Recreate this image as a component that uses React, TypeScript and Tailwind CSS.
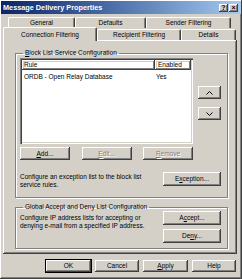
import React from "react";

const raised =
  "shadow-[inset_-1px_-1px_#404040,inset_1px_1px_#ffffff,inset_-2px_-2px_#808080,inset_2px_2px_#d4d0c8]";
const sunken =
  "shadow-[inset_1px_1px_#808080,inset_2px_2px_#404040,inset_-1px_-1px_#ffffff,inset_-2px_-2px_#d4d0c8]";
const disabled = "text-[#808080] [text-shadow:1px_1px_#ffffff]";

function Btn({
  children,
  className = "",
  off = false,
  def = false,
}: {
  children: React.ReactNode;
  className?: string;
  off?: boolean;
  def?: boolean;
}) {
  return (
    <div
      className={`flex items-center justify-center bg-[#d4d0c8] ${raised} ${
        def ? "outline outline-1 outline-black" : ""
      } ${off ? disabled : "text-black"} ${className}`}
    >
      {children}
    </div>
  );
}

function Tab({ label, className = "", active = false }: { label: string; className?: string; active?: boolean }) {
  return (
    <div
      className={`flex items-center justify-center rounded-t-[2px] border-l border-t border-r border-l-white border-t-white border-r-[#404040] bg-[#d4d0c8] shadow-[inset_-1px_0_#808080] ${
        active ? "relative z-10 mb-[-1px] h-[14px]" : "h-[11px]"
      } ${className}`}
    >
      {label}
    </div>
  );
}

function Chevron({ up }: { up?: boolean }) {
  return (
    <svg width="7" height="4" viewBox="0 0 7 4">
      <polyline
        points={up ? "0.5,3.5 3.5,0.5 6.5,3.5" : "0.5,0.5 3.5,3.5 6.5,0.5"}
        fill="none"
        stroke="#000"
        strokeWidth="1"
      />
    </svg>
  );
}

const group =
  "border border-[#808080] shadow-[inset_1px_1px_#ffffff,1px_1px_#ffffff]";

export default function App() {
  return (
    <div
      className={`flex h-[279px] w-[242px] flex-col bg-[#d4d0c8] text-[6.5px] leading-[8px] text-black ${raised}`}
      style={{ fontFamily: '"Liberation Sans", Arial, sans-serif' }}
    >
      <div className="mx-[1px] mt-[1px] flex h-[13px] items-center justify-between bg-gradient-to-r from-[#0a246a] to-[#a6caf0] pl-[2px] pr-[3px]">
        <span className="text-[7.3px] font-bold text-white">Message Delivery Properties</span>
        <div className="flex gap-[1px]">
          <Btn className="h-[8px] w-[9px] text-[7px] font-bold leading-none">?</Btn>
          <Btn className="h-[8px] w-[9px] text-[7px] font-bold leading-none">×</Btn>
        </div>
      </div>

      <div className="mt-[3px] pl-[3px]">
        <div className="flex pl-[5px]">
          <Tab label="General" className="w-[67px]" />
          <Tab label="Defaults" className="w-[71px]" />
          <Tab label="Sender Filtering" className="w-[85px]" />
        </div>
        <div className="flex h-[12px] items-end">
          <Tab label="Connection Filtering" className="w-[94px]" active />
          <Tab label="Recipient Filtering" className="w-[84px]" />
          <Tab label="Details" className="w-[55px]" />
        </div>
      </div>

      <div className={`mx-[3px] flex h-[214px] w-[234px] flex-col pl-[12px] pr-[9px] pt-[9px] ${raised}`}>
        <fieldset className={`${group} pb-[8px] pl-[4px]`}>
          <legend className="ml-[3px] px-[2px]">
            <u>B</u>lock List Service Configuration
          </legend>
          <div className="mt-[1px] flex">
            <div className={`h-[86px] w-[173px] bg-white p-[2px] ${sunken}`}>
              <div className="flex h-[10px]">
                <div className={`flex w-[133px] items-center pl-[2px] ${raised}`}>Rule</div>
                <div className={`flex flex-1 items-center pl-[3px] ${raised}`}>Enabled</div>
              </div>
              <div className="mt-[2px] flex h-[9px] items-center">
                <span className="w-[133px] pl-[2px]">ORDB - Open Relay Database</span>
                <span className="pl-[1px]">Yes</span>
              </div>
            </div>
            <div className="ml-[5px] flex flex-col gap-[8px] pt-[28px]">
              <Btn className="h-[13px] w-[23px]">
                <Chevron up />
              </Btn>
              <Btn className="h-[13px] w-[23px]">
                <Chevron />
              </Btn>
            </div>
          </div>
          <div className="mt-[3px] flex w-[173px] justify-between">
            <Btn className="h-[13px] w-[50px]">
              <span>
                <u>A</u>dd...
              </span>
            </Btn>
            <Btn className="h-[13px] w-[50px]" off>
              <span>
                <u>E</u>dit...
              </span>
            </Btn>
            <Btn className="h-[13px] w-[50px]" off>
              <span>
                <u>R</u>emove
              </span>
            </Btn>
          </div>
          <div className="mt-[12px] flex items-start">
            <p className="mt-[1px] w-[143px]">Configure an exception list to the block list service rules.</p>
            <Btn className="h-[14px] w-[58px]">
              <span>
                E<u>x</u>ception...
              </span>
            </Btn>
          </div>
        </fieldset>

        <fieldset className={`${group} mt-[5px] pb-[5px] pl-[4px]`}>
          <legend className="ml-[3px] px-[2px]">Global Accept and Deny List Configuration</legend>
          <div className="flex items-start">
            <p className="mt-[3px] w-[143px]">
              Configure IP address lists for accepting or denying e-mail from a specified IP address.
            </p>
            <div className="flex flex-col gap-[4px]">
              <Btn className="h-[14px] w-[58px]">
                <span>
                  A<u>c</u>cept...
                </span>
              </Btn>
              <Btn className="h-[14px] w-[58px]">
                <span>
                  De<u>n</u>y...
                </span>
              </Btn>
            </div>
          </div>
        </fieldset>
      </div>

      <div className="mt-[6px] flex gap-[4px] pl-[46px]">
        <Btn className="h-[12px] w-[45px]" def>
          OK
        </Btn>
        <Btn className="h-[12px] w-[44px]">Cancel</Btn>
        <Btn className="h-[12px] w-[45px]">
          <span>
            <u>A</u>pply
          </span>
        </Btn>
        <Btn className="h-[12px] w-[44px]">Help</Btn>
      </div>
    </div>
  );
}
